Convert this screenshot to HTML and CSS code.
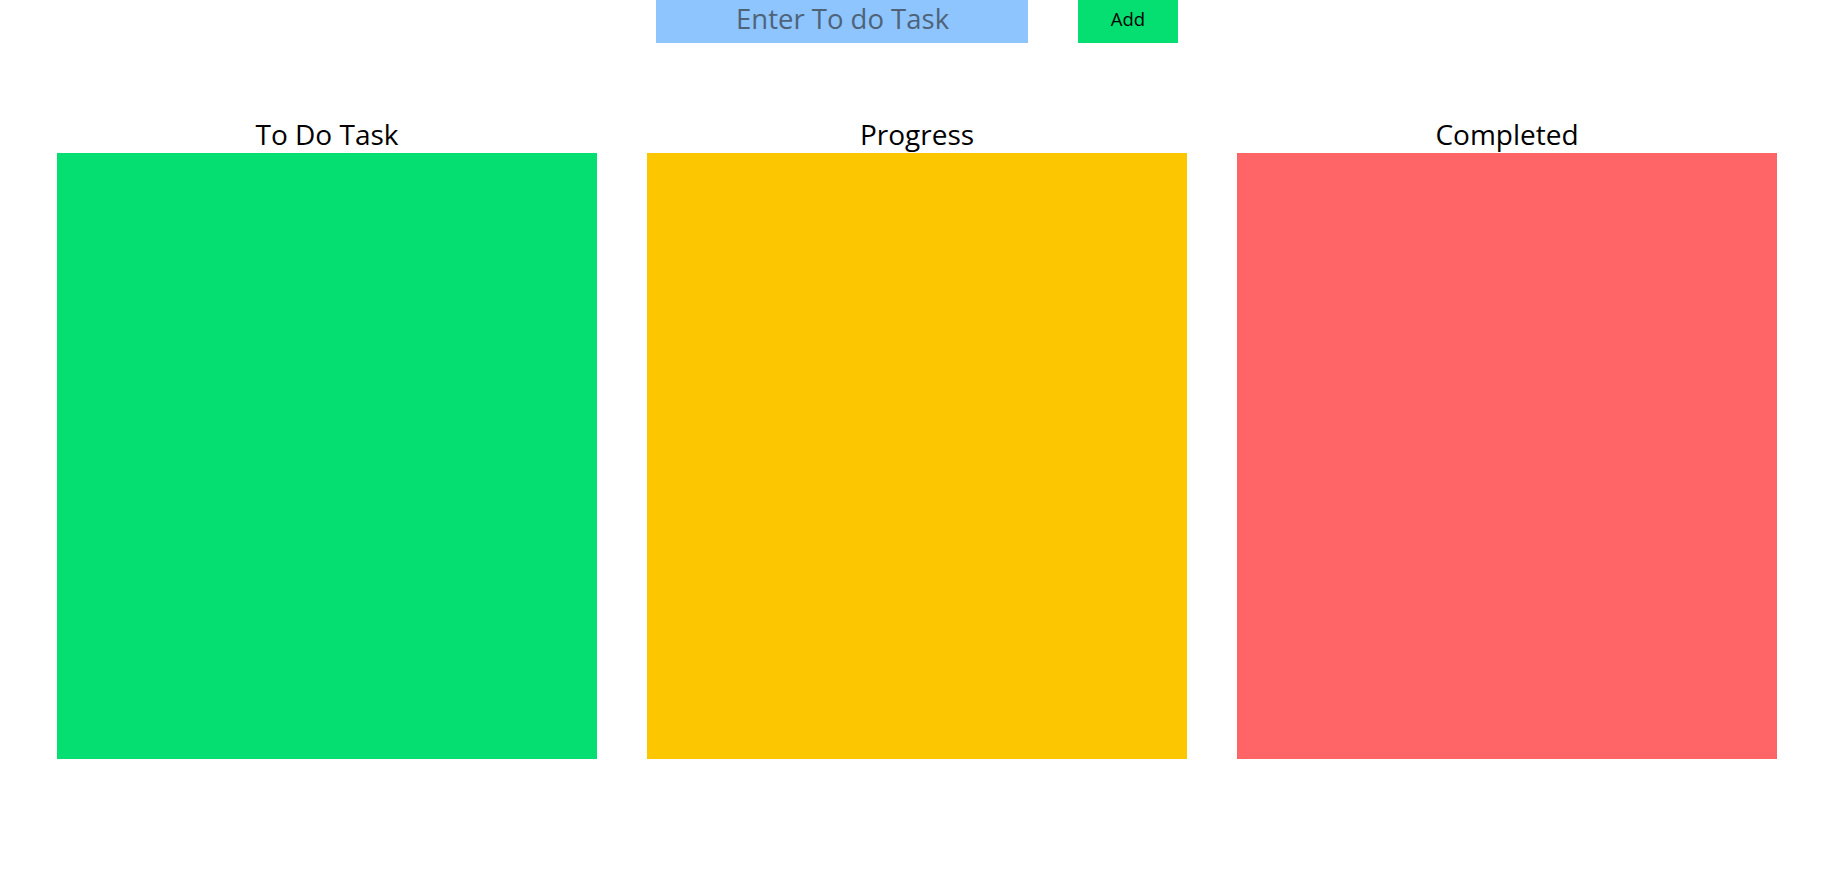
FILE: index.html
```html
<!DOCTYPE html>
<html>
<head>
<meta charset="utf-8">
<link rel="stylesheet" href="styles.css">
</head>
<body>
<div class="topbar">
  <input class="task-input" type="text" placeholder="Enter To do Task">
  <button class="add-btn">Add</button>
</div>
<div class="board">
  <section class="column">
    <h2 class="col-title">To Do Task</h2>
    <div class="col-box todo"></div>
  </section>
  <section class="column">
    <h2 class="col-title">Progress</h2>
    <div class="col-box progress"></div>
  </section>
  <section class="column">
    <h2 class="col-title">Completed</h2>
    <div class="col-box done"></div>
  </section>
</div>
</body>
</html>
```
FILE: styles.css
```css
html, body {
  margin: 0;
  padding: 0;
  background: #ffffff;
}
body {
  font-family: "Open Sans", "Noto Sans", sans-serif;
  color: #000;
}
.topbar {
  display: flex;
  justify-content: center;
  gap: 50px;
  padding-left: 8px;
}
.task-input {
  box-sizing: border-box;
  width: 372px;
  height: 43px;
  border: none;
  outline: none;
  background: #8ec5ff;
  margin: 0;
  padding: 0 0 6px 80px;
  font-family: "Open Sans", "Noto Sans", sans-serif;
  font-size: 27.5px;
  color: #1e2939;
}
.task-input::placeholder {
  color: #4f6378;
  opacity: 1;
}
.add-btn {
  box-sizing: border-box;
  width: 100px;
  height: 43px;
  border: none;
  margin: 0;
  padding: 0 0 7px 0;
  background: #05df72;
  font-family: "Open Sans", "Noto Sans", sans-serif;
  font-size: 18.5px;
  color: #000;
}
.board {
  display: flex;
  gap: 50px;
  padding: 0 49px 0 57px;
  margin-top: 72px;
}
.column {
  flex: 1;
  display: flex;
  flex-direction: column;
}
.col-title {
  margin: 0;
  text-align: center;
  font-weight: 400;
  font-size: 28px;
  line-height: 38px;
}
.col-box {
  height: 606px;
}
.todo { background: #05df72; }
.progress { background: #fdc700; }
.done { background: #ff6467; }
```
